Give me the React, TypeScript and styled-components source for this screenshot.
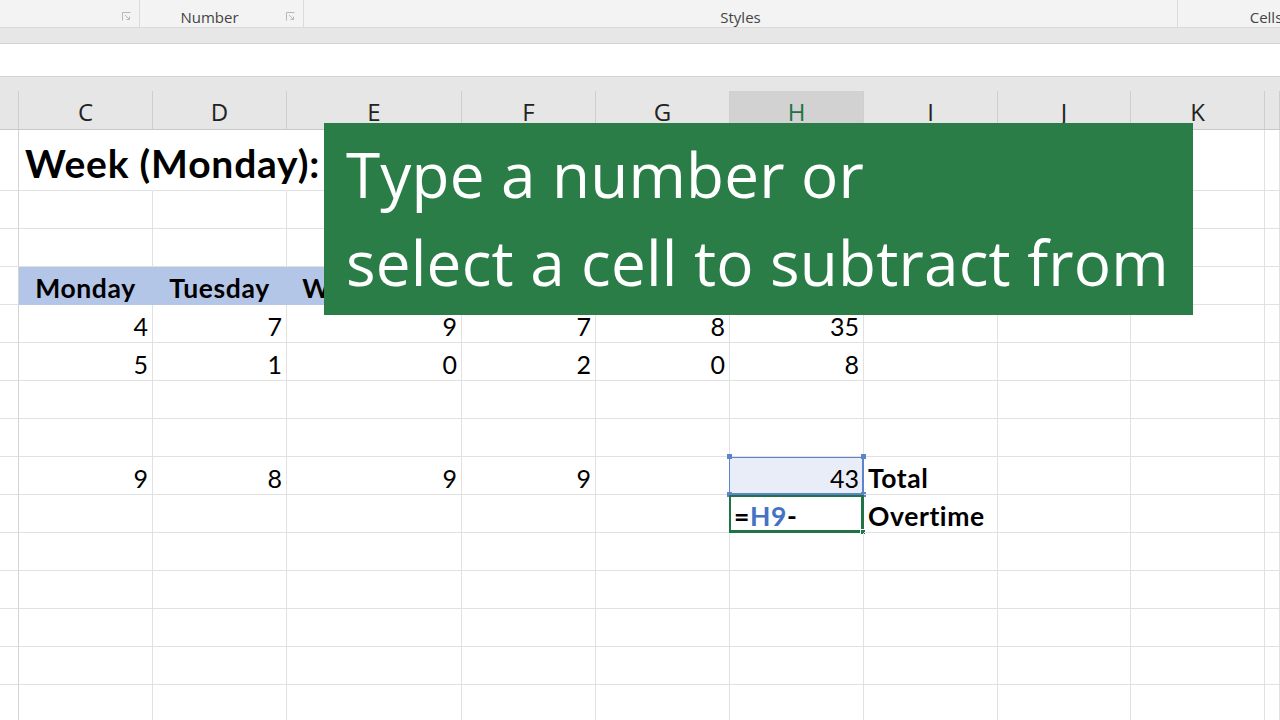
import React from "react";
import styled, { createGlobalStyle } from "styled-components";

const GlobalStyle = createGlobalStyle`
  html, body {
    margin: 0;
    padding: 0;
    width: 1280px;
    height: 720px;
    overflow: hidden;
    background: #ffffff;
  }
  * {
    box-sizing: border-box;
  }
`;

const COLS = "19px 134px 134px 175px 134px 134px 134px 134px 133px 134px 15px";
const LETTERS = ["C", "D", "E", "F", "G", "H", "I", "J", "K"];

type CellData = {
  text?: React.ReactNode;
  align?: "left" | "right" | "center";
  bold?: boolean;
};

// rows under the header, one entry per column C..K
const rows: { height: number; fill?: boolean; cells: (CellData | null)[] }[] = [
  { height: 61, cells: [] },
  { height: 38, cells: [] },
  { height: 38, cells: [] },
  {
    height: 38,
    fill: true,
    cells: [
      { text: "Monday", bold: true, align: "center" },
      { text: "Tuesday", bold: true, align: "center" },
      { text: "Wednesday", bold: true, align: "center" },
    ],
  },
  {
    height: 38,
    cells: [
      { text: "4", align: "right" },
      { text: "7", align: "right" },
      { text: "9", align: "right" },
      { text: "7", align: "right" },
      { text: "8", align: "right" },
      { text: "35", align: "right" },
    ],
  },
  {
    height: 38,
    cells: [
      { text: "5", align: "right" },
      { text: "1", align: "right" },
      { text: "0", align: "right" },
      { text: "2", align: "right" },
      { text: "0", align: "right" },
      { text: "8", align: "right" },
    ],
  },
  { height: 38, cells: [] },
  { height: 38, cells: [] },
  {
    height: 38,
    cells: [
      { text: "9", align: "right" },
      { text: "8", align: "right" },
      { text: "9", align: "right" },
      { text: "9", align: "right" },
      null,
      null,
      { text: "Total", bold: true },
    ],
  },
  {
    height: 38,
    cells: [null, null, null, null, null, null, { text: "Overtime", bold: true }],
  },
  { height: 38, cells: [] },
  { height: 38, cells: [] },
  { height: 38, cells: [] },
  { height: 38, cells: [] },
  { height: 38, cells: [] },
];

const Launcher = () => (
  <LauncherBox>
    <svg width="9" height="9" viewBox="0 0 9 9">
      <path d="M0.5 8.5V0.5H8.5" fill="none" stroke="#b8b8b8" strokeWidth="1" />
      <path d="M3 3L7.5 7.5M7.5 4.5V7.5H4.5" fill="none" stroke="#b8b8b8" strokeWidth="1" />
    </svg>
  </LauncherBox>
);

const App = () => {
  return (
    <>
      <GlobalStyle />
      <Window>
        <Ribbon>
          <Group $width={140} $launcher>
            <Launcher />
          </Group>
          <Group $width={164} $launcher>
            <GroupLabel>Number</GroupLabel>
            <Launcher />
          </Group>
          <Group $width={874}>
            <GroupLabel>Styles</GroupLabel>
          </Group>
          <Group $width={176} $last>
            <GroupLabel>Cells</GroupLabel>
          </Group>
        </Ribbon>
        <RibbonFoot />
        <FormulaBar />
        <ColumnHeaders>
          <HeaderRow>
            <HeaderCell />
            {LETTERS.map((l) => (
              <HeaderCell key={l} $active={l === "H"}>
                {l}
              </HeaderCell>
            ))}
            <HeaderCell />
          </HeaderRow>
        </ColumnHeaders>

        <Sheet>
          {rows.map((row, r) => (
            <Row key={r} $height={row.height}>
              <RowHead />
              {LETTERS.map((l, c) => {
                const cell = row.cells[c];
                const fill = row.fill && c < 6;
                if (r === 0 && c === 0) {
                  return (
                    <Cell key={l} $overflow>
                      <Title>Week (Monday):</Title>
                    </Cell>
                  );
                }
                if (r === 0 && c === 1) return <Cell key={l} $overflow />;
                if (r === 8 && l === "H") {
                  return (
                    <RefCell key={l}>
                      <CellText $align="right">43</CellText>
                      <Handle $pos="tl" />
                      <Handle $pos="tr" />
                      <Handle $pos="bl" />
                      <Handle $pos="br" />
                    </RefCell>
                  );
                }
                if (r === 9 && l === "H") {
                  return (
                    <EditCell key={l}>
                      <CellText $bold>
                        =<Ref>H9</Ref>-
                      </CellText>
                      <EditHandle />
                    </EditCell>
                  );
                }
                return (
                  <Cell key={l} $fill={fill}>
                    {cell && (
                      <CellText $align={cell.align} $bold={cell.bold}>
                        {cell.text}
                      </CellText>
                    )}
                  </Cell>
                );
              })}
              <Cell />
            </Row>
          ))}
        </Sheet>

        <Callout>
          <CalloutLine>Type a number or</CalloutLine>
          <CalloutLine>select a cell to subtract from</CalloutLine>
        </Callout>
      </Window>
    </>
  );
};

export default App;

const Window = styled.div`
  position: relative;
  width: 1280px;
  height: 720px;
  overflow: hidden;
  background: #ffffff;
`;

const Ribbon = styled.div`
  display: flex;
  height: 28px;
  background-color: #f3f3f3;
  border-bottom: 1px solid #d9d9d9;
  overflow: hidden;
`;

const Group = styled.div<{ $width: number; $last?: boolean; $launcher?: boolean }>`
  position: relative;
  flex: 0 0 ${(p) => p.$width}px;
  height: 100%;
  display: flex;
  align-items: center;
  justify-content: center;
  padding-right: ${(p) => (p.$launcher ? "24px" : "0")};
  border-right: ${(p) => (p.$last ? "none" : "1px solid #dcdcdc")};
`;

const GroupLabel = styled.span`
  font-family: "Open Sans", "Noto Sans", sans-serif;
  font-size: 15px;
  color: #444444;
  margin-top: 7px;
  white-space: nowrap;
`;

const LauncherBox = styled.span`
  position: absolute;
  right: 8px;
  top: 12px;
  display: flex;
`;

const RibbonFoot = styled.div`
  height: 16px;
  background-color: #e7e7e7;
  border-bottom: 1px solid #d4d4d4;
`;

const FormulaBar = styled.div`
  height: 33px;
  background-color: #ffffff;
  border-bottom: 1px solid #d4d4d4;
`;

const ColumnHeaders = styled.div`
  height: 53px;
  padding-top: 14px;
  background-color: #e6e6e6;
  border-bottom: 1px solid #c8c8c8;
`;

const HeaderRow = styled.div`
  display: grid;
  grid-template-columns: ${COLS};
  height: 38px;
`;

const HeaderCell = styled.div<{ $active?: boolean }>`
  display: flex;
  align-items: center;
  justify-content: center;
  border-right: 1px solid #cfcfcf;
  background-color: ${(p) => (p.$active ? "#d2d2d2" : "transparent")};
  color: ${(p) => (p.$active ? "#217346" : "#222222")};
  font-family: "Open Sans", "Noto Sans", sans-serif;
  font-size: 24px;
  padding-top: 2px;
`;

const Sheet = styled.div`
  display: flex;
  flex-direction: column;
`;

const Row = styled.div<{ $height: number }>`
  display: grid;
  grid-template-columns: ${COLS};
  height: ${(p) => p.$height}px;
`;

const RowHead = styled.div`
  border-right: 1px solid #d4d4d4;
  border-bottom: 1px solid #e1e1e1;
`;

const Cell = styled.div<{ $fill?: boolean; $overflow?: boolean }>`
  position: relative;
  display: flex;
  align-items: center;
  min-width: 0;
  background-color: ${(p) => (p.$fill ? "#b4c6e7" : "transparent")};
  border-right: 1px solid
    ${(p) => (p.$fill ? "#b4c6e7" : p.$overflow ? "transparent" : "#e1e1e1")};
  border-bottom: 1px solid ${(p) => (p.$fill ? "#b4c6e7" : "#e1e1e1")};
  overflow: visible;
`;

const CellText = styled.span<{ $align?: "left" | "right" | "center"; $bold?: boolean }>`
  flex: 1;
  text-align: ${(p) => p.$align ?? "left"};
  padding: 4px 4px 0 4px;
  font-family: "Lato", "Liberation Sans", sans-serif;
  font-size: ${(p) => (p.$bold ? "26.5px" : "25px")};
  letter-spacing: ${(p) => (p.$bold ? "0.6px" : "0")};
  font-weight: ${(p) => (p.$bold ? 700 : 400)};
  color: #000000;
  white-space: nowrap;
`;

const Title = styled.span`
  position: absolute;
  left: 6px;
  top: 10px;
  font-family: "Lato", "Liberation Sans", sans-serif;
  font-size: 39px;
  letter-spacing: 0.8px;
  font-weight: 700;
  color: #000000;
  white-space: nowrap;
  z-index: 1;
`;

const RefCell = styled(Cell)`
  background-color: #e8edf8;
  box-shadow: inset 0 0 0 1px #5b84cc;
  border-right-color: #5b84cc;
  border-bottom-color: #5b84cc;
  margin-left: -1px;
`;

const Handle = styled.span<{ $pos: "tl" | "tr" | "bl" | "br" }>`
  position: absolute;
  width: 5px;
  height: 5px;
  background-color: #5b84cc;
  top: ${(p) => (p.$pos[0] === "t" ? "-3px" : "auto")};
  bottom: ${(p) => (p.$pos[0] === "b" ? "-3px" : "auto")};
  left: ${(p) => (p.$pos[1] === "l" ? "-2px" : "auto")};
  right: ${(p) => (p.$pos[1] === "r" ? "-3px" : "auto")};
`;

const EditCell = styled(Cell)`
  box-shadow: inset 0 0 0 2px #217346;
  border-right-color: #217346;
  border-bottom-color: #217346;
  margin-left: -1px;
  padding-left: 1px;
`;

const EditHandle = styled.span`
  position: absolute;
  right: -3px;
  bottom: -3px;
  width: 6px;
  height: 6px;
  background-color: #217346;
  border: 1px solid #ffffff;
`;

const Ref = styled.span`
  color: #4472c4;
`;

const Callout = styled.div`
  position: absolute;
  left: 324px;
  top: 123px;
  width: 869px;
  height: 192px;
  padding: 9px 0 0 22px;
  background-color: #2a7d47;
  display: flex;
  flex-direction: column;
  gap: 3px;
`;

const CalloutLine = styled.div`
  font-family: "Open Sans", "Noto Sans", sans-serif;
  font-size: 62px;
  line-height: 85px;
  color: #ffffff;
  white-space: nowrap;
  letter-spacing: 0.2px;
`;
